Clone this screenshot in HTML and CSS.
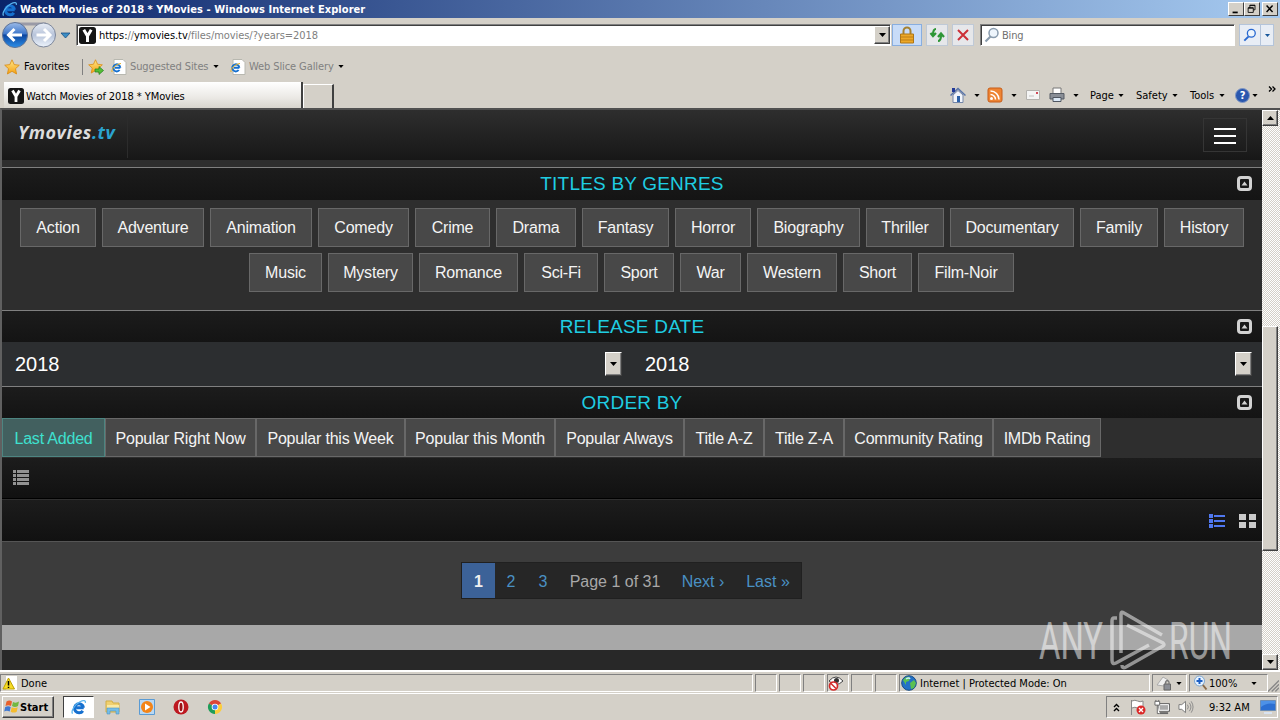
FILE: index.html
```
<!DOCTYPE html>
<html lang="en">
<head>
    <meta charset="UTF-8">
    <meta name="viewport" content="width=device-width, initial-scale=1.0">
    <title>Watch Movies of 2018 * YMovies</title>
    <link rel="stylesheet" href="styles.css">
</head>
<body>
    <svg class="sprite" width="0" height="0">
        <defs>
            <linearGradient id="blue-ball" x1="0" y1="0" x2="0" y2="1">
                <stop offset="0" stop-color="#9dbbe8"/><stop offset=".45" stop-color="#3f78cb"/>
                <stop offset=".5" stop-color="#0c459f"/><stop offset="1" stop-color="#2c8fe8"/>
            </linearGradient>
            <linearGradient id="pale-ball" x1="0" y1="0" x2="0" y2="1">
                <stop offset="0" stop-color="#e8edf6"/><stop offset=".5" stop-color="#b8c4da"/><stop offset="1" stop-color="#eef4fc"/>
            </linearGradient>
            <linearGradient id="gold" x1="0" y1="0" x2="0" y2="1">
                <stop offset="0" stop-color="#ffe88a"/><stop offset="1" stop-color="#f5a010"/>
            </linearGradient>
        </defs>
        <symbol id="ie" viewBox="0 0 16 16">
            <path d="M12.700 8.700H5.200M12.500 8.700A4.500 4.500 0 1 0 11.800 11.800" fill="none" stroke="#1670cf" stroke-width="3"/>
            <path d="M1.600 14.600C-.5 12 4 5.500 9 2.800 12 1.200 15 1 14.300 3.800" fill="none" stroke="#5ab4ee" stroke-width="1.300"/>
        </symbol>
        <symbol id="ie-page" viewBox="0 0 16 16">
            <path d="M3 .5h9l3 3v12H3z" fill="#fff" stroke="#b8b8b0"/>
            <path d="M9.300 8.700H4M9.300 8.700A3.500 3.500 0 1 0 8.600 11" fill="none" stroke="#1670cf" stroke-width="2"/>
            <path d="M1 13C0 10 5 5 10 4.500" fill="none" stroke="#e8b020"/>
        </symbol>
        <symbol id="ylogo" viewBox="0 0 16 16">
            <rect width="16" height="16" rx="2.500" fill="#151515"/>
            <path d="M4.500 2.500 8 8.500 11.500 2.500M8 8v6" fill="none" stroke="#fff" stroke-width="2.800"/>
        </symbol>
        <symbol id="star" viewBox="0 0 16 16">
            <path d="M8 .8 10.200 5.600 15.300 6.200 11.500 9.700 12.600 15 8 12.300 3.400 15 4.500 9.700.7 6.200 5.800 5.600z" fill="url(#gold)" stroke="#d98a10" stroke-width=".8"/>
        </symbol>
        <symbol id="caret" viewBox="0 0 7 4"><path d="M0 0h7L3.500 4z"/></symbol>
        <symbol id="collapse" viewBox="0 0 15 15">
            <rect x="1.500" y="1.500" width="12" height="12" rx="2.500" fill="none" stroke="#d2d2d2" stroke-width="3"/>
            <path d="M4.500 9.500 7.500 5.500l3 4z" fill="#d2d2d2"/>
        </symbol>
        <symbol id="lens" viewBox="0 0 16 16">
            <path d="M6.500 9.500 1.500 14.500" stroke="currentColor" stroke-width="2.200"/>
            <circle cx="9.500" cy="6" r="4.500" fill="#eef5fc" stroke="currentColor" stroke-width="1.500"/>
        </symbol>
    </svg>

    <div class="titlebar">
        <svg class="title-icon"><use href="#ie"/></svg>
        <span class="title-text">Watch Movies of 2018 * YMovies - Windows Internet Explorer</span>
        <div class="win-buttons">
            <span class="win-button"><svg viewBox="0 0 16 14"><path d="M4 10h6v2H4z"/></svg></span>
            <span class="win-button"><svg viewBox="0 0 16 14"><path d="M5.500 6V2.500h6V8H9.500M5.500 3h6M3.500 5.500h6V11h-6zM3.500 6h6" fill="none" stroke="#000"/></svg></span>
            <span class="win-button close"><svg viewBox="0 0 16 14"><path d="M4 3 11 10.500M11 3 4 10.500" stroke="#000" stroke-width="1.700"/></svg></span>
        </div>
    </div>

    <div class="nav-row">
        <svg class="nav-balls" viewBox="0 0 75 30">
            <path d="M14 4h32" stroke="#9a9aa6" stroke-width="3"/>
            <circle cx="15" cy="15" r="12.500" fill="url(#blue-ball)" stroke="#5f7396"/>
            <path d="M22 15H9M14.500 9 8.500 15l6 6" fill="none" stroke="#fff" stroke-width="3"/>
            <circle cx="43.500" cy="15" r="12" fill="url(#pale-ball)" stroke="#7d879b"/>
            <path d="M36.500 15h13M44 9l6 6-6 6" fill="none" stroke="#fff" stroke-width="3"/>
            <path d="M61 13h9l-4.500 5z" fill="#3b8dc4" stroke="#174f86" stroke-width=".8"/>
        </svg>
        <div class="address">
            <svg class="site-icon"><use href="#ylogo"/></svg>
            <span class="url">https:<i>//</i>ymovies.tv<i>/files/movies/?years=2018</i></span>
            <span class="drop-button"><svg><use href="#caret"/></svg></span>
        </div>
        <span class="tool-button lock">
            <svg viewBox="0 0 16 18"><path d="M4.500 9V5a3.500 3.500 0 0 1 7 0v4" fill="none" stroke="#a58232" stroke-width="2"/><path d="M1.500 8h13v9h-13z" fill="#eda827" stroke="#ae7617"/><path d="M2 11h12M2 14h12" stroke="#bd7e16"/></svg>
        </span>
        <span class="tool-button">
            <svg viewBox="0 0 16 18"><path d="M7 3Q4 3 4 9M1.500 7 4 10l3-3M9 15q3 0 3-6M9 11l3-3.500 3 3.500" fill="none" stroke="#2e9636" stroke-width="2.200"/></svg>
        </span>
        <span class="tool-button">
            <svg viewBox="0 0 16 18"><path d="M3 4 13 14M13 4 3 14" stroke="#cc3038" stroke-width="2"/></svg>
        </span>
        <div class="search-box">
            <svg><use href="#lens"/></svg>
            <span>Bing</span>
        </div>
        <div class="search-go">
            <span><svg class="go-lens"><use href="#lens"/></svg></span>
            <span><svg class="go-caret"><use href="#caret"/></svg></span>
        </div>
    </div>

    <div class="fav-row">
        <svg class="icon"><use href="#star"/></svg>
        <span class="fav-label">Favorites</span>
        <svg class="icon add-fav" viewBox="0 0 16 16"><use href="#star" width="15" height="15"/><path d="M7 10h4V7.500l4.500 4L11 15.500V13H7z" fill="#55bd36" stroke="#208020" stroke-width=".7"/></svg>
        <svg class="icon"><use href="#ie-page"/></svg>
        <span class="fav-link suggested">Suggested Sites</span>
        <svg class="caret"><use href="#caret"/></svg>
        <svg class="icon slice"><use href="#ie-page"/></svg>
        <span class="fav-link gallery">Web Slice Gallery</span>
        <svg class="caret"><use href="#caret"/></svg>
    </div>

    <div class="tab-row">
        <div class="tab">
            <svg class="icon"><use href="#ylogo"/></svg>
            <span>Watch Movies of 2018 * YMovies</span>
        </div>
        <div class="new-tab"></div>
        <div class="commands">
            <svg class="icon" viewBox="0 0 16 16"><path d="M3 8v7.500h10V8L8 3.500z" fill="#f2f5fb" stroke="#7486a8"/><path d="M.5 8.500 8 1.500l7.500 7" fill="none" stroke="#5773a8" stroke-width="1.500"/><path d="M2 1h3v4H2z" fill="#223a98"/><path d="M7 9h3v6H7z" fill="#2c61a8"/></svg>
            <svg class="caret"><use href="#caret"/></svg>
            <svg class="icon" viewBox="0 0 16 16"><rect x="1" y="1" width="14" height="14" rx="2" fill="#ee8434" stroke="#c75d18"/><circle cx="4.500" cy="11.500" r="1.500" fill="#fff"/><path d="M3.500 7.500a5 5 0 0 1 5 5M3.500 4a8.500 8.500 0 0 1 8.500 8.500" fill="none" stroke="#fff" stroke-width="1.600"/></svg>
            <svg class="caret"><use href="#caret"/></svg>
            <svg class="icon mail" viewBox="0 0 16 16"><path d="M1.500 3.500h13v9h-13z" fill="#f4f4f4" stroke="#b4b2ae"/><path d="M11 5h2v2h-2z" fill="#d04a58"/><path d="M4 9h5" stroke="#c0c0c0"/></svg>
            <svg class="icon" viewBox="0 0 16 16"><path d="M4 1h8v6H4z" fill="#fff" stroke="#777"/><path d="M1 6.500h14V12H1z" fill="#898e96" stroke="#555b64"/><path d="M4 10.500h8v4H4z" fill="#dce9f6" stroke="#4f5661"/></svg>
            <svg class="caret"><use href="#caret"/></svg>
            <span class="cmd page-menu">Page</span><svg class="caret"><use href="#caret"/></svg>
            <span class="cmd safety">Safety</span><svg class="caret"><use href="#caret"/></svg>
            <span class="cmd tools">Tools</span><svg class="caret"><use href="#caret"/></svg>
            <span class="help">?</span><svg class="caret"><use href="#caret"/></svg>
            <svg class="more" viewBox="0 0 8 6"><path d="M1 .5 3.500 3 1 5.500M4.500.5 7 3 4.500 5.500" fill="none" stroke="#000" stroke-width="1.300"/></svg>
        </div>
    </div>

    <div class="viewport">
        <div class="page">
            <header class="site-header">
                <div class="logo">Ymovies<span>.tv</span></div>
                <div class="burger"><i></i><i></i><i></i></div>
            </header>

            <div class="section-title first">TITLES BY GENRES <svg><use href="#collapse"/></svg></div>
            <div class="genres">
                <div class="genre-row row-one">
                    <a>Action</a><a>Adventure</a><a>Animation</a><a>Comedy</a><a>Crime</a><a>Drama</a><a>Fantasy</a><a>Horror</a><a>Biography</a><a>Thriller</a><a>Documentary</a><a>Family</a><a>History</a>
                </div>
                <div class="genre-row row-two">
                    <a>Music</a><a>Mystery</a><a>Romance</a><a>Sci-Fi</a><a>Sport</a><a>War</a><a>Western</a><a>Short</a><a>Film-Noir</a>
                </div>
            </div>

            <div class="section-title">RELEASE DATE <svg><use href="#collapse"/></svg></div>
            <div class="dates">
                <div class="select">2018 <span><svg><use href="#caret"/></svg></span></div>
                <div class="select">2018 <span><svg><use href="#caret"/></svg></span></div>
            </div>

            <div class="section-title">ORDER BY <svg><use href="#collapse"/></svg></div>
            <div class="order">
                <a class="active">Last Added</a><a>Popular Right Now</a><a>Popular this Week</a><a>Popular this Month</a><a>Popular Always</a><a>Title A-Z</a><a>Title Z-A</a><a>Community Rating</a><a>IMDb Rating</a>
            </div>

            <div class="bar list-bar">
                <svg viewBox="0 0 16 16" fill="#929292"><path d="M0 0h3v3H0zM4 0h12v3H4zM0 4h3v3H0zM4 4h12v3H4zM0 8h3v3H0zM4 8h12v3H4zM0 12h3v3H0zM4 12h12v3H4z"/></svg>
            </div>
            <div class="bar view-bar">
                <svg viewBox="0 0 17 15" fill="#5078f0"><path d="M0 0h4v4H0zM5 1h11v2H5zM0 5h4v4H0zM5 6h11v2H5zM0 10h4v4H0zM5 11h11v2H5z"/></svg>
                <svg viewBox="0 0 17 15" fill="#cacaca"><path d="M0 0h7v6H0zM10 0h7v6h-7zM0 8h7v6H0zM10 8h7v6h-7z"/></svg>
            </div>

            <div class="pager-area">
                <div class="pager">
                    <b>1</b><a>2</a><a>3</a><span>Page 1 of 31</span><a>Next ›</a><a>Last »</a>
                </div>
            </div>
            <div class="ad-strip"></div>
            <div class="footer-strip"></div>
        </div>
        <div class="scrollbar">
            <span class="scroll-button"><svg class="flip"><use href="#caret"/></svg></span>
            <span class="thumb"></span>
            <span class="scroll-button bottom"><svg><use href="#caret"/></svg></span>
        </div>
        <svg class="watermark" viewBox="0 0 241 60">
            <g font-family="Roboto" font-size="52" fill="#fff">
                <text x="2" y="49" textLength="64" lengthAdjust="spacingAndGlyphs">ANY</text>
                <text x="132" y="49" textLength="63" lengthAdjust="spacingAndGlyphs">RUN</text>
            </g>
            <path d="M80 8h-3q-2 0-2 3v39q0 5 4 3l33-18M84 43V4q0-3 3-1l38 22M90 15l36 18q2 2 0 3L89 57q-4 2-4-2" fill="none" stroke="#fff" stroke-width="3.500"/>
        </svg>
    </div>

    <div class="statusbar">
        <div class="pane done">
            <svg class="icon" viewBox="0 0 16 16"><path d="M4 1h11v14H4z" fill="#fff"/><path d="M6.500 3 1 14h11.500z" fill="#f7dc24" stroke="#bca000"/><path d="M6.500 6v4.500M6.500 11.700v1.300" stroke="#000" stroke-width="1.500"/></svg>
            <span>Done</span>
        </div>
        <div class="pane"></div>
        <div class="pane"></div>
        <div class="pane"></div>
        <div class="pane">
            <svg class="icon" viewBox="0 0 16 16"><path d="M1 6q7-8 14 0-7 7-14 0z" fill="#fff" stroke="#444"/><circle cx="8.500" cy="5.500" r="2.500" fill="#333"/><circle cx="5.500" cy="11" r="4" fill="#fff" stroke="#d42a2a" stroke-width="1.700"/><path d="m3 8.500 5 5" stroke="#d42a2a" stroke-width="1.500"/></svg>
        </div>
        <div class="pane"></div>
        <div class="pane"></div>
        <div class="pane zone">
            <svg class="icon" viewBox="0 0 16 16"><circle cx="8" cy="8" r="7.300" fill="#2471c6" stroke="#174c85"/><path d="M2 5q3-4 7-3l-1 4-3 1v3zM9 8l4-3 2 3-2 5-3 1z" fill="#5bc052"/><path d="M5 4q3-2 4 0" fill="none" stroke="#c5e9ff" stroke-width="1.500"/></svg>
            <span>Internet | Protected Mode: On</span>
        </div>
        <div class="pane filter">
            <svg class="icon" viewBox="0 0 16 16"><path d="M1 10 7 2l5 3-4 6z" fill="#efefef" stroke="#aaa"/><path d="M8 9h6.500v6H8z" fill="#8a8d94" stroke="#666"/><path d="M9.500 9V7q1.800-3 3.500 0v2" fill="none" stroke="#777" stroke-width="1.300"/></svg>
            <svg class="caret"><use href="#caret"/></svg>
        </div>
        <div class="pane zoom">
            <svg class="icon" viewBox="0 0 16 16"><path d="m9.500 9.500 4 5" stroke="#8b6a48" stroke-width="2"/><circle cx="6.500" cy="6" r="5" fill="#e4f1ff" stroke="#7ea6cf"/><path d="M3.500 6h6M6.500 3v6" stroke="#1c5fc4" stroke-width="2"/></svg>
            <span>100%</span>
            <svg class="caret"><use href="#caret"/></svg>
        </div>
        <svg class="grip" viewBox="0 0 12 12"><path d="M0 12 12 0M4 12l8-8M8 12l4-4" stroke="#888" stroke-width="1.500"/></svg>
    </div>

    <div class="taskbar">
        <div class="start">
            <svg viewBox="0 0 16 16"><path d="M2.500 2.500q3-2 5.500 0L7 7Q4.500 5.500 1.500 7z" fill="#e8602c"/><path d="M9 3q3 1.500 6-.5L14 7q-3 1.800-6 0z" fill="#72b840"/><path d="M1.200 8q3-1.500 5.500 0l-1 4.500q-3-1.500-5.500 0z" fill="#3f78d2"/><path d="M7.700 8.200q3 1.500 6 0l-1 4.500q-3 1.800-6 0z" fill="#f5bc2e"/></svg>
            <b>Start</b>
        </div>
        <span class="task pressed"><svg><use href="#ie"/></svg></span>
        <span class="task"><svg viewBox="0 0 16 16"><path d="M1 2h6l1 2h6v9H1z" fill="#f0d070" stroke="#d2ae45"/><path d="M2 6h12v5H2z" fill="#f9e9a4"/><path d="M2 15V9h12v6h-3v-3H5v3z" fill="#74bde8" stroke="#4d93bf" stroke-width=".6"/></svg></span>
        <span class="task"><svg viewBox="0 0 16 16"><path d="M.5.5h15v15H.5z" fill="#b9d8f3" stroke="#5a9bd4"/><circle cx="8" cy="8" r="6" fill="#f38418"/><path d="M6 4.500v7L11.500 8z" fill="#fff"/></svg></span>
        <span class="task"><svg viewBox="0 0 16 16"><circle cx="8" cy="8" r="7.500" fill="#bd1820"/><ellipse cx="8" cy="8" rx="2.200" ry="5" fill="#9b1015" stroke="#fff" stroke-width="1.300"/></svg></span>
        <span class="task"><svg viewBox="0 0 16 16"><path d="M8 8 1.900 4.500A7 7 0 0 1 14.100 4.500z" fill="#dc4436"/><path d="M8 8 14.100 4.500A7 7 0 0 1 8 15z" fill="#fccd3c"/><path d="M8 8v7A7 7 0 0 1 1.900 4.500z" fill="#1f9d59"/><circle cx="8" cy="8" r="3.300" fill="#fff"/><circle cx="8" cy="8" r="2.500" fill="#4686ee"/></svg></span>
        <div class="tray">
            <svg class="chev" viewBox="0 0 8 9"><path d="M1 4 3.500 1.500 6 4M1 8l2.500-2.500L6 8" fill="none" stroke="#000" stroke-width="1.400"/></svg>
            <svg class="flag" viewBox="0 0 16 16"><path d="M1.500 1v15M2 2q3-1.500 5.500 0T13 2v7q-3 1.500-5.500 0T2 9" fill="#fff" stroke="#888"/><circle cx="11" cy="11" r="4.500" fill="#db2828"/><path d="m9 9 4 4m0-4-4 4" stroke="#fff" stroke-width="1.400"/></svg>
            <svg class="net" viewBox="0 0 17 16"><path d="M4.500 4.500h12v8h-12z" fill="#aaa" stroke="#555"/><path d="M5.500 5.500h10v6h-10z" fill="none" stroke="#fff"/><path d="M6 14.500h9" stroke="#666" stroke-width="2"/><path d="M1 2h5v4H1zM2 .5V2M5 .5V2M3.500 6v9H6" fill="#fff" stroke="#666"/></svg>
            <svg class="sound" viewBox="0 0 17 16"><path d="M1 5.500h3L8 2v12L4 10.500H1z" fill="#fff" stroke="#777"/><path d="M10 5.500q2 2.500 0 5M12 3.500q3.500 4.500 0 9M14 2q4 6 0 12" fill="none" stroke="#888"/></svg>
            <span class="clock">9:32 AM</span>
            <svg class="desktop" viewBox="0 0 16 14"><path d="M.5.5h15v10H.5z" fill="#2c6fd2" stroke="#6c8db5"/><path d="M1 7Q7 2 15 4V1H1z" fill="#4d91e7"/><path d="M4 13h8" stroke="#d9e3f0" stroke-width="2"/></svg>
        </div>
    </div>
</body>
</html>
```
FILE: styles.css
```
* {
    margin: 0;
    padding: 0;
    box-sizing: border-box;
}

body {
    width: 1280px;
    height: 720px;
    overflow: hidden;
    background: #d4d0c8;
    font-family: 'DejaVu Sans Condensed', 'DejaVu Sans', sans-serif;
    font-size: 11px;
    color: #000;
    white-space: nowrap;
}

svg {
    display: block;
    flex: none;
}

.sprite {
    position: absolute;
}

.icon {
    width: 16px;
    height: 16px;
}

.caret {
    width: 6px;
    height: 3px;
}

/* window chrome */
.titlebar {
    display: flex;
    align-items: center;
    height: 18px;
    padding: 0 2px;
    background: linear-gradient(90deg, #0a246a, #a6caf0);
    color: #fff;
}

.title-icon {
    width: 16px;
    height: 16px;
}

.title-text {
    margin-left: 2px;
    font-weight: bold;
    letter-spacing: 0.06px;
}

.win-buttons {
    display: flex;
    margin-left: auto;
}

.win-button {
    width: 16px;
    height: 14px;
    background: #d4d0c8;
    border: 1px solid;
    border-color: #fff #404040 #404040 #fff;
}

.win-button svg {
    width: 14px;
    height: 12px;
}

.close {
    margin-left: 2px;
}

.nav-row {
    display: flex;
    align-items: center;
    height: 32px;
    padding-top: 2px;
}

.nav-balls {
    width: 75px;
    height: 30px;
    margin-right: 1px;
}

.address,
.search-box {
    display: flex;
    align-items: center;
    height: 22px;
    background: #fff;
    border: 1px solid;
    border-color: #808080 #fff #fff #808080;
    box-shadow: inset 1px 1px #404040;
}

.address {
    width: 815px;
    padding-left: 2px;
}

.site-icon {
    width: 17px;
    height: 17px;
}

.url {
    margin: 1px 0 0 3px;
    letter-spacing: -0.06px;
}

.url i {
    font-style: normal;
    color: #808080;
}

.drop-button,
.scroll-button,
.select span {
    display: flex;
    align-items: center;
    justify-content: center;
    background: #d4d0c8;
    border: 1px solid;
    border-color: #fff #404040 #404040 #fff;
    box-shadow: inset -1px -1px #808080;
}

.drop-button {
    width: 16px;
    height: 18px;
    margin-left: auto;
}

.drop-button svg,
.scroll-button svg,
.select svg {
    width: 7px;
    height: 4px;
}

.tool-button {
    display: flex;
    align-items: center;
    justify-content: center;
    width: 22px;
    height: 22px;
    margin-left: 4px;
    background: #e6e7ea;
    border: 1px solid #bfc9d6;
}

.tool-button svg {
    width: 16px;
    height: 18px;
}

.lock {
    width: 30px;
    margin-left: 1px;
    background: #c8dcf8;
    border-color: #88aee0;
}

.search-box {
    width: 255px;
    margin-left: 6px;
    padding-left: 3px;
    color: #707070;
}

.search-box svg {
    width: 16px;
    height: 16px;
    margin-right: 2px;
    color: #8a9cae;
}

.search-box span {
    margin-top: 1px;
    letter-spacing: -0.2px;
}

.search-go {
    display: flex;
    width: 35px;
    height: 22px;
    margin-left: 4px;
    background: #e8edf5;
    border: 1px solid #b4c4da;
}

.search-go span {
    display: flex;
    align-items: center;
    justify-content: center;
    width: 21px;
    color: #2868d0;
}

.search-go span + span {
    width: 13px;
    border-left: 1px solid #b4c4da;
}

.go-lens {
    width: 14px;
    height: 14px;
}

.go-caret {
    width: 5px;
    height: 3px;
    fill: #17569b;
}

.fav-row {
    display: flex;
    align-items: center;
    height: 30px;
    padding: 3px 0 0 4px;
}

.fav-label {
    width: 58px;
    margin-left: 4px;
    letter-spacing: 0.1px;
}

.add-fav {
    box-sizing: content-box;
    margin-right: 7px;
    padding-left: 5px;
    border-left: 1px solid #808080;
}

.fav-link {
    margin-left: 3px;
    color: #808080;
}

.suggested {
    width: 83px;
    letter-spacing: -0.1px;
}

.gallery {
    width: 88px;
    letter-spacing: -0.1px;
}

.gallery + .caret {
    margin-left: 1px;
}

.slice {
    margin-left: 11px;
}

.tab-row {
    display: flex;
    height: 28px;
    padding: 2px 0 0 4px;
}

.tab {
    display: flex;
    align-items: center;
    width: 299px;
    padding: 2px 0 0 4px;
    background: linear-gradient(#fff, #ebe9e5 60%, #d8d5ce);
    border-right: 2px solid #404040;
}

.tab span {
    margin-left: 2px;
    letter-spacing: -0.08px;
}

.new-tab {
    width: 31px;
    margin-top: 2px;
    border: 1px solid #fff;
    border-right: 2px solid #404040;
    border-bottom: none;
}

.commands {
    display: flex;
    align-items: center;
    width: 330px;
    margin-left: auto;
}

.commands .icon + .caret {
    margin: 0 7px 0 8px;
}

.commands .mail {
    margin-left: 1px;
}

.commands .mail + .icon {
    margin-left: 8px;
}

.commands .mail + .icon + .caret {
    margin-right: 11px;
}

.page-menu {
    width: 28px;
}

.safety {
    width: 36px;
    margin-left: 12px;
}

.tools {
    width: 29px;
    margin-left: 12px;
}

.help {
    width: 15px;
    height: 15px;
    margin: 0 2px 0 10px;
    border: 1px solid #8097c4;
    border-radius: 50%;
    background: #2a57ae;
    color: #fff;
    font-weight: bold;
    line-height: 13px;
    text-align: center;
}

.more {
    width: 8px;
    height: 6px;
    margin: -13px 4px 0 auto;
}

/* web page */
.viewport {
    position: relative;
    display: flex;
    height: 562px;
    border-top: 2px solid #505050;
    border-left: 2px solid #606060;
    font-family: 'Liberation Sans', Arial, sans-serif;
    font-size: 16px;
}

.page {
    width: 1260px;
    background: #2e2e2e;
}

.site-header {
    display: flex;
    height: 50px;
    background: linear-gradient(#2e2e2e, #171717);
}

.logo {
    width: 126px;
    height: 48px;
    padding: 10px 0 0 16px;
    border-right: 1px solid #2c2c2c;
    font: italic bold 18px/24px 'Open Sans', sans-serif;
    letter-spacing: 0.55px;
    color: #ddd;
}

.logo span {
    color: #2ba4cf;
}

.burger {
    display: flex;
    flex-direction: column;
    gap: 5px;
    width: 44px;
    height: 34px;
    margin: 8px 15px 0 auto;
    padding: 9px 10px 0;
    border: 1px solid #353535;
}

.burger i {
    flex: none;
    height: 2px;
    background: #fff;
}

.section-title {
    position: relative;
    height: 32px;
    border-top: 1px solid #808080;
    background: linear-gradient(#1c1c1c, #141414);
    color: #1fcde2;
    font-size: 19px;
    line-height: 31px;
    letter-spacing: 0.2px;
    text-align: center;
}

.section-title svg {
    position: absolute;
    right: 10px;
    top: 8px;
    width: 15px;
    height: 15px;
}

.first {
    height: 33px;
    margin-top: 7px;
}

.genres {
    height: 110px;
    padding-top: 8px;
}

.genre-row {
    display: grid;
    gap: 6px;
    margin-bottom: 6px;
}

.row-one {
    grid-template-columns: 76px 102px 102px 91px 75px 80px 87px 76px 103px 78px 124px 78px 80px;
    padding-left: 18px;
}

.row-two {
    grid-template-columns: 73px 85px 99px 74px 70px 61px 90px 69px 96px;
    padding-left: 247px;
}

.genre-row a,
.order a {
    height: 39px;
    background: #484848;
    border: 1px solid #686868;
    color: #f4f4f4;
    line-height: 38px;
    letter-spacing: -0.2px;
    text-align: center;
}

.dates {
    display: flex;
    height: 44px;
    background: #2c2e30;
    color: #fff;
    font-size: 20px;
}

.select {
    display: flex;
    align-items: center;
    width: 630px;
    padding: 0 10px 0 13px;
}

.select span {
    width: 17px;
    height: 24px;
    margin: -1px 0 0 auto;
}

.order {
    display: grid;
    grid-template-columns: 103px 151px 149px 150px 129px 80px 80px 149px 108px;
    height: 40px;
}

.order a {
    line-height: 39px;
}

.order .active {
    background: #42605f;
    border-color: #4d8581;
    color: #3ee0d0;
}

.bar {
    display: flex;
    align-items: center;
    height: 41px;
    background: linear-gradient(#1c1c1c, #111);
}

.list-bar {
    padding-left: 11px;
    border-bottom: 1px solid #000;
}

.list-bar svg {
    width: 16px;
    height: 16px;
}

.view-bar {
    justify-content: flex-end;
    gap: 13px;
    height: 43px;
    padding: 1px 6px 0 0;
    border-top: 1px solid #303030;
    border-bottom: 1px solid #555;
}

.view-bar svg {
    width: 17px;
    height: 15px;
}

.pager-area {
    height: 83px;
    padding: 20px 0 0 459px;
    background: #3c3c3c;
}

.pager {
    display: grid;
    grid-template-columns: 33px 32px 32px 112px 64px 66px;
    width: 341px;
    height: 37px;
    border: 1px solid #202020;
    background: #262626;
    color: #4a91c4;
    line-height: 37px;
    text-align: center;
}

.pager > * {
    height: 35px;
}

.pager b {
    background: #3c6298;
    color: #f0f0f0;
}

.pager span {
    color: #a8a8a8;
}

.ad-strip {
    height: 25px;
    background: #a8a8a8;
}

.footer-strip {
    height: 20px;
    background: #282828;
}

.scrollbar {
    display: flex;
    flex-direction: column;
    width: 18px;
    padding-right: 2px;
    background: repeating-conic-gradient(#d4d0c8 0 25%, #fff 0 50%) 0 0 / 2px 2px;
}

.scroll-button {
    width: 16px;
    height: 16px;
}

.bottom {
    margin-top: auto;
}

.flip {
    transform: rotate(180deg);
}

.thumb {
    height: 225px;
    margin-top: 200px;
    background: #d4d0c8;
    border: 1px solid;
    border-color: #fff #404040 #404040 #fff;
    box-shadow: inset -1px -1px #808080;
}

.watermark {
    position: absolute;
    left: 1035px;
    top: 500px;
    width: 241px;
    height: 60px;
    opacity: 0.5;
}

/* status bar and taskbar */
.statusbar {
    display: flex;
    gap: 2px;
    height: 24px;
    padding-top: 2px;
    border-top: 2px solid #fff;
    border-bottom: 1px solid #fff;
}

.pane {
    display: flex;
    align-items: center;
    width: 22px;
    height: 18px;
    border: 1px solid;
    border-color: #808080 #fff #fff #808080;
}

.pane span {
    margin-left: 3px;
}

.done {
    width: 753px;
    padding-left: 1px;
}

.zone {
    width: 251px;
    padding-left: 1px;
}

.filter {
    width: 35px;
    padding-left: 3px;
}

.filter .caret {
    margin-left: 4px;
}

.zoom {
    width: 79px;
    padding-left: 3px;
}

.zoom span {
    margin-left: 0;
}

.zoom .caret {
    margin: 0 10px 0 auto;
}

.grip {
    width: 11px;
    height: 12px;
    margin: 6px 0 0 -2px;
}

.taskbar {
    display: flex;
    align-items: center;
    height: 26px;
    padding-left: 2px;
}

.start {
    display: flex;
    align-items: center;
    width: 52px;
    height: 22px;
    margin-right: 9px;
    padding-left: 1px;
    border: 1px solid;
    border-color: #fff #404040 #404040 #fff;
    box-shadow: inset -1px -1px #808080;
}

.start svg {
    width: 16px;
    height: 16px;
}

.start b {
    letter-spacing: 0;
}

.task {
    display: flex;
    align-items: center;
    justify-content: center;
    width: 31px;
    height: 22px;
    margin-right: 3px;
}

.task svg {
    width: 16px;
    height: 16px;
}

.pressed {
    background: #fff;
    border: 1px solid;
    border-color: #404040 #fff #fff #404040;
}

.tray {
    display: flex;
    align-items: center;
    width: 172px;
    height: 22px;
    margin: 0 2px 0 auto;
    padding-left: 6px;
    border: 1px solid;
    border-color: #808080 #fff #fff #808080;
}

.chev {
    width: 8px;
    height: 9px;
}

.flag,
.net,
.sound {
    width: 16px;
    height: 16px;
    margin-left: 8px;
}

.flag {
    margin-left: 9px;
}

.clock {
    width: 42px;
    margin-left: 15px;
}

.desktop {
    width: 16px;
    height: 14px;
    margin-left: 9px;
}
```
